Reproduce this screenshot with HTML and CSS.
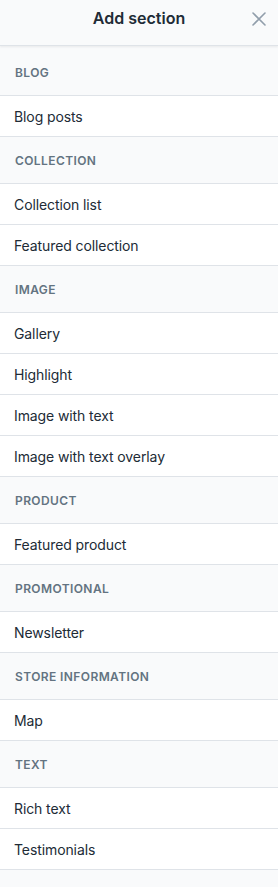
FILE: index.html
```html
<!DOCTYPE html>
<html lang="en">
<head>
    <meta charset="UTF-8">
    <meta name="viewport" content="width=device-width, initial-scale=1.0">
    <title>Add section</title>
    <link rel="stylesheet" href="styles.css">
</head>
<body>
    <div class="panel">
        <div class="panel-header">
            <h1>Add section</h1>
            <button class="close" aria-label="Close">
                <svg width="14" height="14" viewBox="0 0 14 14"><path d="M1 1l12 12M13 1L1 13" stroke="#919eab" stroke-width="1.6" stroke-linecap="round"/></svg>
            </button>
        </div>

        <div class="group-title first">Blog</div>
        <div class="item">Blog posts</div>

        <div class="group-title">Collection</div>
        <div class="item">Collection list</div>
        <div class="item">Featured collection</div>

        <div class="group-title">Image</div>
        <div class="item">Gallery</div>
        <div class="item">Highlight</div>
        <div class="item">Image with text</div>
        <div class="item">Image with text overlay</div>

        <div class="group-title">Product</div>
        <div class="item">Featured product</div>

        <div class="group-title">Promotional</div>
        <div class="item">Newsletter</div>

        <div class="group-title">Store information</div>
        <div class="item">Map</div>

        <div class="group-title">Text</div>
        <div class="item">Rich text</div>
        <div class="item">Testimonials</div>
    </div>
</body>
</html>
```

FILE: styles.css
```css
body { margin: 0; background: #f9fafb; font-family: Inter, "Noto Sans", sans-serif; color: #212b36; }
.panel { width: 278px; }
.panel-header { position: relative; height: 45px; display: flex; align-items: center; justify-content: center; border-bottom: 1px solid #dfe3e8; box-shadow: 0 1px 2px rgba(33, 43, 54, 0.08); background: #f9fafb; }
.panel-header h1 { margin: 0; font-size: 16px; font-weight: 600; padding-bottom: 9px; line-height: 20px; }
.close { position: absolute; right: 12px; top: 12px; width: 14px; height: 14px; padding: 0; border: 0; background: none; display: flex; }
.group-title { height: 46px; display: flex; align-items: center; padding: 0 15px; border-bottom: 1px solid #dfe3e8; background: #f9fafb; font-size: 12px; font-weight: 600; letter-spacing: 0.4px; text-transform: uppercase; color: #637381; }
.group-title.first { height: 46px; padding-top: 3px; }
.item { height: 40px; display: flex; align-items: center; padding: 0 14px; border-bottom: 1px solid #dfe3e8; background: #fff; font-size: 14px; letter-spacing: -0.1px; box-shadow: 0 1px 1px rgba(33, 43, 54, 0.04); }
```
